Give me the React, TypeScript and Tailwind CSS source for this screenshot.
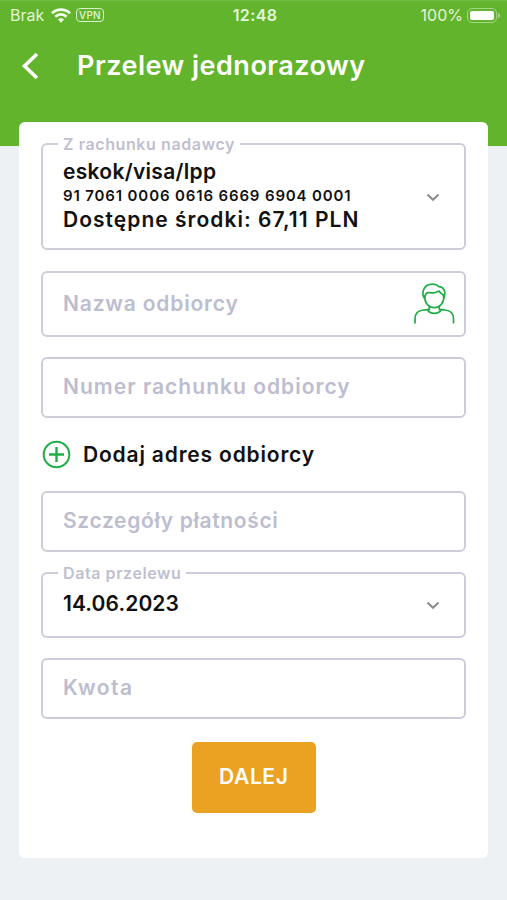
import React from 'react';

interface FieldProps {
  className: string;
  label?: string;
  labelClassName?: string;
  children: React.ReactNode;
}

// Outlined box, optionally with a label sitting on its top border
const Field: React.FC<FieldProps> = ({ className, label, labelClassName = '', children }) => (
  <div className={`relative flex items-center rounded-[6px] border-2 border-[#cdccdb] pl-5 pr-[9px] ${className}`}>
    {label && (
      <span
        className={`absolute -top-[11px] left-[15px] bg-white px-[5px] text-[16px] leading-5 font-semibold whitespace-nowrap text-[#bfbfd1] ${labelClassName}`}
      >
        {label}
      </span>
    )}
    {children}
  </div>
);

const Placeholder: React.FC<{ className: string; children: React.ReactNode }> = ({ className, children }) => (
  <span className={`pb-px text-[21px] leading-7 font-semibold whitespace-nowrap text-[#bdbdd0] ${className}`}>
    {children}
  </span>
);

const ChevronDown = () => (
  <svg className="mr-[15px] ml-auto h-[14px] w-[14px]" viewBox="0 0 14 14" fill="none" stroke="#8e8e8e" strokeWidth="2.2">
    <path d="M1.5 4.5 7 9.7l5.5-5.2" />
  </svg>
);

const PersonIcon = () => (
  <svg className="ml-auto h-[42px] w-[42px]" viewBox="0 0 42 42" fill="none" stroke="#1fad45" strokeWidth="1.7">
    {/* shoulders and collar */}
    <path d="M2 40.500v-4.500c0-5.500 3.300-8.600 8.500-9 2.300-.2 4.300-.3 5.800-.6v-3.600M40.500 40.500v-4.500c0-5.500-3.300-8.600-8.500-9-2.300-.2-4.300-.3-5.700-.6v-3.600" />
    <path d="M14.500 27c1.500 2.300 3.900 3.400 6.800 3.400s5.300-1.100 6.800-3.400" />
    {/* face */}
    <path d="M11.500 12.500c0 7.300 3.800 12.200 9.800 12.200s9.700-4.900 9.700-12.200" />
    {/* hair */}
    <path d="M11.600 15.500C9.800 13 9.500 9.800 10.500 7 11.900 3.200 15.300 1.200 19.700 1.200c2.900 0 4.800.8 6.300 2.400 4.500.3 7.300 4.600 5 11.400" />
    <path d="M11.800 14.500c.2-2.500 1.200-4.200 2.700-5 2.600.2 5.300.6 7.500.2 1.900-.4 2.600-1.400 4.200-1.600.6 1.200 1.300 1.900 2.600 2.600 1.300.8 1.900 2 2.100 3.800" />
  </svg>
);

const StatusBar = () => (
  <div className="grid h-[28px] grid-cols-3 items-center pr-[7px] pl-[10px] font-['Inter',sans-serif] text-[16px] text-[#e3f4d8]">
    <div className="flex items-center">
      <span className="w-[34px]">Brak</span>
      <svg className="ml-[7px] h-[15px] w-[20px]" viewBox="0 0 20 15" fill="none" stroke="#f5fff0" strokeWidth="2.7">
        <path d="M1 5.300C6 .4 14 .4 19 5.300" />
        <path d="M4.300 8.800c3.300-3.200 8.100-3.200 11.400 0" />
        <path d="m10 14.700-3-3.300c1.700-1.600 4.300-1.600 6 0Z" fill="#f5fff0" stroke="none" />
      </svg>
      <span className="ml-[5px] flex h-[14px] w-[28px] items-center justify-center rounded-[4px] border-[1.5px] border-[#d9f0cc] text-[10px] leading-none font-medium tracking-[0.3px]">
        VPN
      </span>
    </div>
    <span className="text-center text-[16px] font-semibold tracking-[0.4px]">12:48</span>
    <div className="flex items-center justify-end">
      <span>100%</span>
      <span className="ml-[4px] h-[15px] w-[30px] rounded-[5px] border border-[#a2d584] p-[2px]">
        <span className="block h-full rounded-[2px] bg-white" />
      </span>
      <span className="ml-px h-[5px] w-[2px] rounded-r-full bg-[#a2d584]" />
    </div>
  </div>
);

export default function App() {
  return (
    <div className="h-[900px] w-full overflow-hidden bg-[#edf1f4] font-['Inter',sans-serif] text-[#111]">
      {/* Header */}
      <header className="h-[146px] border-t border-[#72bd45] bg-[#62b42c]">
        <StatusBar />
        <div className="mt-[2px] flex h-[70px] items-center pl-[21px] text-white">
          <svg className="h-[28px] w-[18px]" viewBox="0 0 18 28" fill="none" stroke="currentColor" strokeWidth="3.6">
            <path d="M16 2 3.500 14 16 26" />
          </svg>
          <h1 className="ml-[38px] text-[27px] leading-9 font-semibold tracking-[0.5px] whitespace-nowrap">
            Przelew jednorazowy
          </h1>
        </div>
      </header>

      {/* Transfer form */}
      <main className="relative mr-[19px] -mt-[24px] ml-[19px] flex h-[736px] flex-col rounded-[6px] bg-white px-[22px] pt-[21px]">
        <Field className="h-[107px]" label="Z rachunku nadawcy" labelClassName="tracking-[0.6px]">
          <div className="pb-[2px] whitespace-nowrap">
            <div className="text-[21px] leading-[26px] font-semibold tracking-[0.3px]">eskok/visa/lpp</div>
            <div className="text-[15px] leading-[21px] font-semibold tracking-[0.86px]">91 7061 0006 0616 6669 6904 0001</div>
            <div className="text-[21px] leading-[27px] font-semibold tracking-[1.03px]">Dostępne środki: 67,11 PLN</div>
          </div>
          <ChevronDown />
        </Field>

        <Field className="mt-[21px] h-[66px]">
          <Placeholder className="tracking-[0.82px]">Nazwa odbiorcy</Placeholder>
          <PersonIcon />
        </Field>

        <Field className="mt-[20px] h-[61px]">
          <Placeholder className="tracking-[1.02px]">Numer rachunku odbiorcy</Placeholder>
        </Field>

        <div className="mt-[22px] flex h-[29px] items-center">
          <svg className="h-[30px] w-[30px]" viewBox="0 0 30 30" fill="none" stroke="#1fad45" strokeWidth="2">
            <circle cx="15.500" cy="14.500" r="12.800" />
            <path d="M15.500 7v15M8 14.500h15" strokeWidth="2.4" />
          </svg>
          <span className="ml-[12px] text-[21px] leading-7 font-semibold tracking-[0.82px] whitespace-nowrap">
            Dodaj adres odbiorcy
          </span>
        </div>

        <Field className="mt-[22px] h-[61px]">
          <Placeholder className="tracking-[0.65px]">Szczegóły płatności</Placeholder>
        </Field>

        <Field className="mt-[20px] h-[66px]" label="Data przelewu" labelClassName="tracking-[0.58px]">
          <span className="pb-[3px] text-[21px] leading-7 font-semibold tracking-[0.1px]">14.06.2023</span>
          <ChevronDown />
        </Field>

        <Field className="mt-[20px] h-[61px]">
          <Placeholder className="tracking-[1.5px]">Kwota</Placeholder>
        </Field>

        <button className="mt-[23px] ml-[150.500px] h-[71px] w-[124.500px] rounded-[5px] bg-[#eba122] pb-[2px] text-[21px] font-semibold tracking-[0.6px] text-white">
          DALEJ
        </button>
      </main>
    </div>
  );
}
